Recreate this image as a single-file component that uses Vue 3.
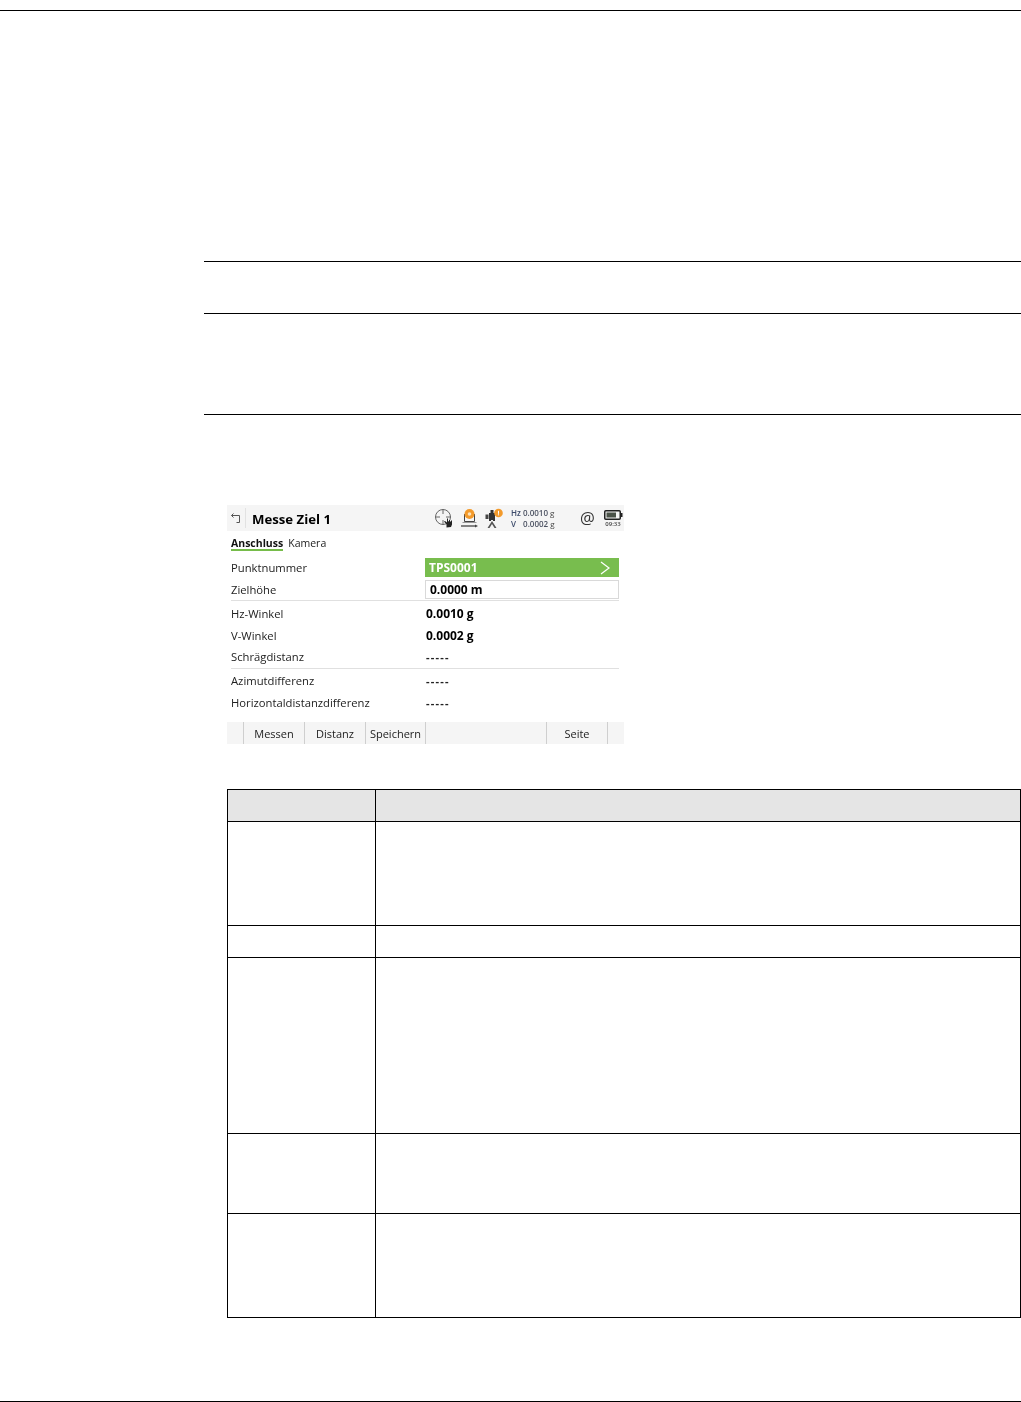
<script setup>
const rows = [
  { label: 'Hz-Winkel', value: '0.0010 g' },
  { label: 'V-Winkel', value: '0.0002 g' },
]
const dashes = [{ label: 'Schrägdistanz', value: '-----' }]
const rows2 = [
  { label: 'Azimutdifferenz', value: '-----' },
  { label: 'Horizontaldistanzdifferenz', value: '-----' },
]
const keys = ['', 'Messen', 'Distanz', 'Speichern', '', 'Seite', '']
const tableRows = [32, 104, 32, 176, 80, 104]
</script>

<template>
  <div class="page">
    <div class="rule top"></div>
    <div class="rule r1"></div>
    <div class="rule r2"></div>
    <div class="rule r3"></div>

    <div class="shot">
      <header class="titlebar">
        <svg class="back" width="12" height="12" viewBox="0 0 12 12" fill="none" stroke="#555" stroke-width="1">
          <path d="M1.500 3.500h8v7h-3" />
          <path d="M3.500 1.500l-2 2 2 2" />
        </svg>
        <span class="sep"></span>
        <h1 class="title">Messe Ziel 1</h1>
        <svg class="ico crosshair" width="20" height="20" viewBox="0 0 20 20" fill="none" stroke="#666" stroke-width="1">
          <circle cx="9" cy="9" r="7.500" />
          <path d="M9 1v5M9 12v5M1 9h5M12 9h5" />
          <path d="M12.500 19.500v-3l-2.500-3 1-.5 2 1.500v-4h1v3h1v-1.500h1v1.500h1v-1h1v4l-1 2.500z" fill="#222" stroke="none" />
        </svg>
        <svg class="ico laptop" width="20" height="20" viewBox="0 0 20 20" fill="none" stroke="#444" stroke-width="1">
          <path d="M4.500 6v7.500h10V6" />
          <path d="M2.500 14.500h14" stroke="#999" />
          <circle cx="9.500" cy="6" r="5" fill="#f39a2b" stroke="none" />
          <circle cx="9.500" cy="6" r="1.800" fill="#fde2b8" stroke="none" />
          <path d="M1 18h15" stroke-width="1.300" />
          <path d="M15 16.500l3 1.500-3 1.500z" fill="#444" stroke="none" />
        </svg>
        <svg class="ico station" width="20" height="20" viewBox="0 0 20 20" fill="none">
          <path d="M5 5h1.500V2h3v3H11v8H9v-1H7v1H5z" fill="#333" />
          <rect x="1.500" y="6.500" width="3" height="4.500" fill="#444" />
          <path d="M8 13l-4.500 7h2L8 16l2.500 4h2z" fill="#555" />
          <circle cx="14.500" cy="5" r="4.300" fill="#f39a2b" />
          <rect x="14" y="2.800" width="1" height="3" fill="#fff" />
          <rect x="14" y="6.300" width="1" height="1" fill="#fff" />
        </svg>
        <div class="angles">
          <div><span class="k">Hz</span> <b>0.0010</b> g</div>
          <div><span class="k v">V</span> <b>0.0002</b> g</div>
        </div>
        <span class="at">@</span>
        <div class="batt">
          <svg width="19" height="10" viewBox="0 0 19 10" fill="none">
            <rect x="0.750" y="0.750" width="15.500" height="8.500" rx="1" stroke="#222" stroke-width="1.500" />
            <rect x="2.500" y="2.500" width="9.500" height="5" fill="#4a5248" />
            <rect x="16.500" y="3" width="2" height="4" fill="#222" />
          </svg>
          <span class="time">09:33</span>
        </div>
      </header>

      <nav class="tabs">
        <span class="tab active">Anschluss</span>
        <span class="tab">Kamera</span>
      </nav>

      <div class="form">
        <div class="row inputrow">
          <span class="label">Punktnummer</span>
          <div class="select">
            <span>TPS0001</span>
            <svg width="12" height="14" viewBox="0 0 12 14" fill="none" stroke="#fff" stroke-width="1.200">
              <path d="M2 1l8 6-8 6" />
            </svg>
          </div>
        </div>
        <div class="row inputrow">
          <span class="label">Zielhöhe</span>
          <div class="input">0.0000 m</div>
        </div>
        <div class="divider d1"></div>
        <div v-for="r in rows" :key="r.label" class="row plain">
          <span class="label">{{ r.label }}</span>
          <span class="value strong">{{ r.value }}</span>
        </div>
        <div v-for="r in dashes" :key="r.label" class="row plain short">
          <span class="label">{{ r.label }}</span>
          <span class="value">{{ r.value }}</span>
        </div>
        <div class="divider d2"></div>
        <div v-for="r in rows2" :key="r.label" class="row plain">
          <span class="label">{{ r.label }}</span>
          <span class="value">{{ r.value }}</span>
        </div>
      </div>

      <footer class="softkeys">
        <span v-for="(k, i) in keys" :key="i" class="key">{{ k }}</span>
      </footer>
    </div>

    <div class="table">
      <div v-for="(h, i) in tableRows" :key="i" class="trow" :class="{ head: i === 0 }" :style="{ height: h + 'px' }">
        <div class="cell c1"></div>
        <div class="cell c2"></div>
      </div>
    </div>

    <div class="rule bottom"></div>
  </div>
</template>

<style>
html, body { margin: 0; background: #fff; }
</style>

<style scoped>
.page {
  width: 1021px;
  height: 1402px;
  display: flex;
  flex-direction: column;
  background: #fff;
  overflow: hidden;
  font-family: "Open Sans", "Noto Sans", sans-serif;
}
.rule { height: 1px; background: #000; flex: none; }
.top { margin-top: 10px; }
.r1 { margin: 250px 0 0 204px; }
.r2 { margin: 51px 0 0 204px; }
.r3 { margin: 100px 0 0 204px; }
.bottom { margin-top: 83px; }

.shot {
  margin: 90px 0 0 227px;
  width: 397px;
  height: 239px;
  flex: none;
  display: flex;
  flex-direction: column;
  color: #222;
  font-size: 11px;
  filter: blur(0.3px);
}
.titlebar {
  height: 26px;
  background: #f5f5f5;
  display: flex;
  align-items: center;
  flex: none;
}
.back { margin-left: 3px; }
.sep { width: 1px; height: 20px; background: #e2e2e2; margin-left: 3px; }
.title { margin: 1px 0 0 6px; font-size: 13.200px; font-weight: 700; color: #000; width: 176px; white-space: nowrap; line-height: 26px; }
.ico { flex: none; }
.crosshair { margin-left: 6px; }
.laptop { margin-left: 6px; }
.station { margin-left: 4px; }
.angles { margin: -1px 0 0 7px; width: 69px; font-size: 8px; line-height: 11px; color: #444; white-space: nowrap; }
.angles b { font-weight: 600; color: #4a5060; }
.k { color: #3c4a6a; font-weight: 600; }
.k.v { margin-right: 5px; }
.at { font-size: 16.500px; color: #333; width: 23px; line-height: 26px; }
.batt { display: flex; flex-direction: column; align-items: center; width: 20px; margin-top: 1px; }
.batt svg { display: block; }
.time { font-size: 6px; font-weight: 600; line-height: 7px; color: #444; margin-top: 1px; }

.tabs { height: 27px; flex: none; display: flex; align-items: flex-start; gap: 5px; padding: 6px 0 0 4px; box-sizing: border-box; }
.tab { font-size: 10.500px; line-height: 12px; color: #222; }
.tab.active { font-weight: 700; color: #111; border-bottom: 2px solid #76bc4a; }

.form { padding-left: 4px; width: 392px; flex: 1; box-sizing: border-box; }
.row { display: flex; align-items: center; }
.label { width: 194px; flex: none; font-size: 11.250px; color: #222; white-space: nowrap; }
.value { font-size: 11px; font-weight: 700; color: #222; letter-spacing: 1.200px; margin-left: 1px; }
.value.strong { font-size: 12px; letter-spacing: 0; color: #000; }
.plain { height: 22px; }
.short { height: 20px; margin-bottom: 2px; }
.inputrow { height: 19px; margin-bottom: 3px; }
.select {
  flex: 1;
  height: 19px;
  background: #78bd4e;
  color: #fff;
  font-weight: 700;
  font-size: 12px;
  display: flex;
  align-items: center;
  justify-content: space-between;
  padding: 0 8px 0 4px;
}
.input {
  flex: 1;
  height: 19px;
  box-sizing: border-box;
  border: 1px solid #d9d9d9;
  font-weight: 700;
  color: #000;
  font-size: 12px;
  line-height: 17px;
  padding-left: 4px;
}
.divider { height: 1px; background: #e0e0e0; }
.d1 { margin: -2px 0 1px; }
.d2 { margin: 0; }

.softkeys {
  height: 22px;
  flex: none;
  background: #f5f5f5;
  display: grid;
  grid-template-columns: 16px 61px 61px 60px 121px 61px 17px;
}
.key {
  font-size: 11px;
  line-height: 20px;
  padding-top: 2px;
  text-align: center;
  color: #222;
  white-space: nowrap;
  border-left: 1px solid #cfcfcf;
}
.key:first-child { border-left: 0; }

.table {
  margin: 45px 0 0 227px;
  width: 794px;
  box-sizing: border-box;
  border: 1px solid #000;
  border-bottom: 0;
  flex: none;
}
.trow { display: flex; box-sizing: border-box; border-bottom: 1px solid #000; }
.head { background: #e5e5e5; }
.c1 { width: 148px; box-sizing: border-box; border-right: 1px solid #000; flex: none; }
.c2 { flex: 1; }
</style>
